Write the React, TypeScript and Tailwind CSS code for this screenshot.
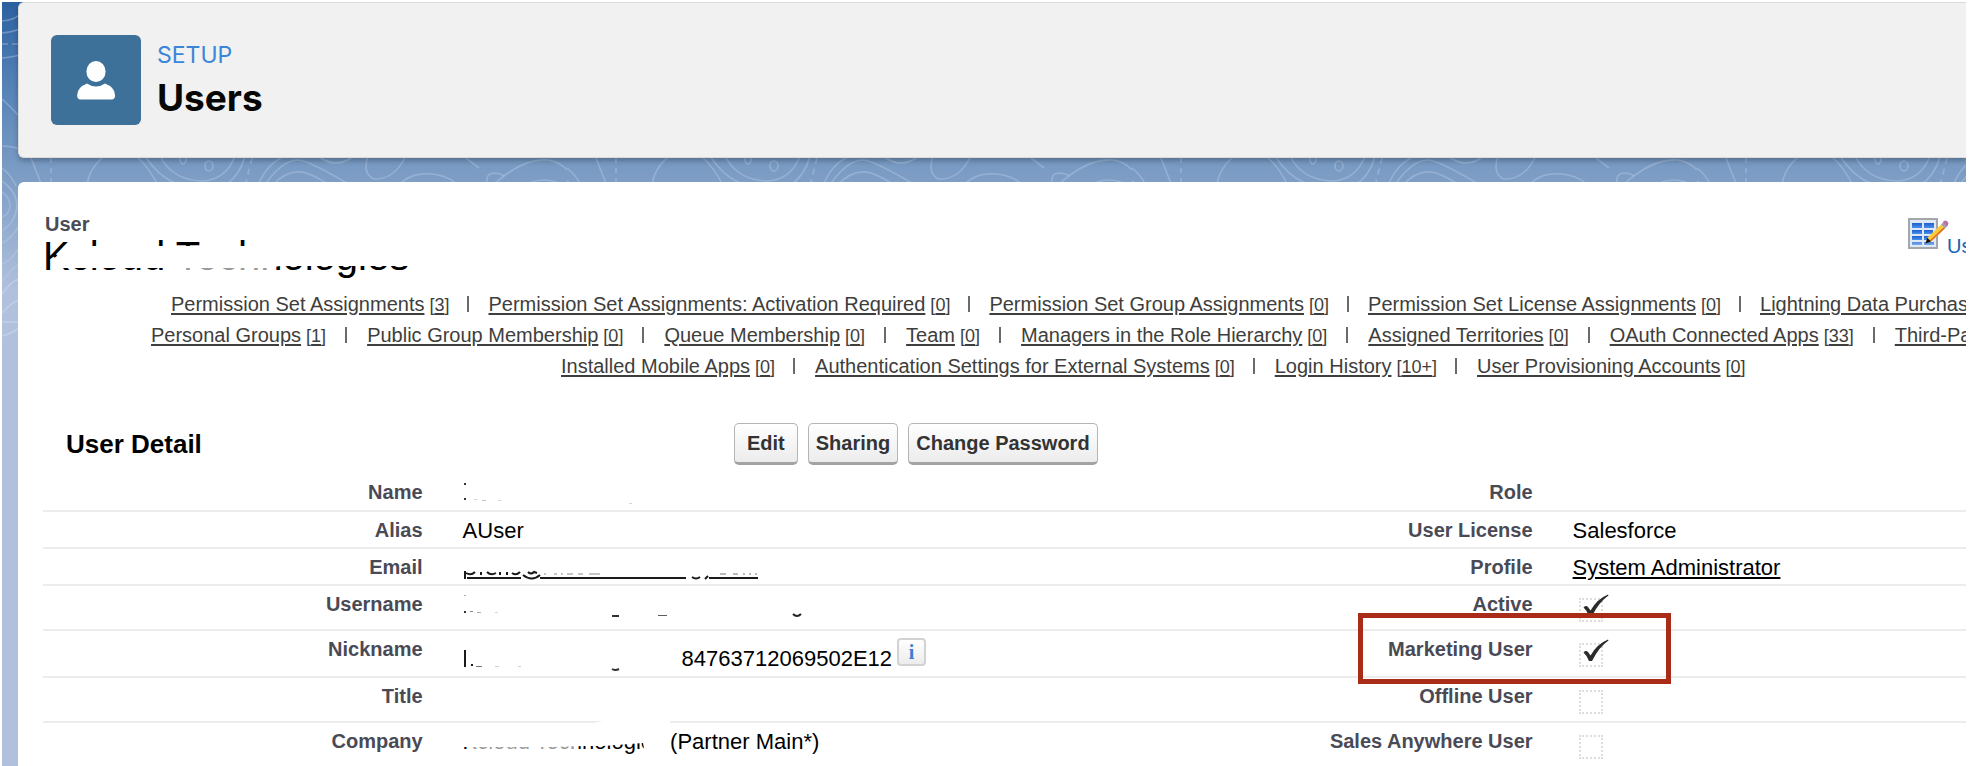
import React from "react";

type RelatedLink = { name: string; count?: string };

const relatedRows: { indent: string; divider: string; links: RelatedLink[] }[] = [
  {
    indent: "pl-[128px]",
    divider: "ml-[18px] mr-[19px]",
    links: [
      { name: "Permission Set Assignments", count: "3" },
      { name: "Permission Set Assignments: Activation Required", count: "0" },
      { name: "Permission Set Group Assignments", count: "0" },
      { name: "Permission Set License Assignments", count: "0" },
      { name: "Lightning Data Purchas" },
    ],
  },
  {
    indent: "pl-[108px]",
    divider: "ml-[19px] mr-5",
    links: [
      { name: "Personal Groups", count: "1" },
      { name: "Public Group Membership", count: "0" },
      { name: "Queue Membership", count: "0" },
      { name: "Team", count: "0" },
      { name: "Managers in the Role Hierarchy", count: "0" },
      { name: "Assigned Territories", count: "0" },
      { name: "OAuth Connected Apps", count: "33" },
      { name: "Third-Pa" },
    ],
  },
  {
    indent: "pl-[518px]",
    divider: "ml-[18px] mr-5",
    links: [
      { name: "Installed Mobile Apps", count: "0" },
      { name: "Authentication Settings for External Systems", count: "0" },
      { name: "Login History", count: "10+" },
      { name: "User Provisioning Accounts", count: "0" },
    ],
  },
];

function Backdrop() {
  return (
    <svg className="absolute inset-0 h-[380px] w-full" aria-hidden="true">
      <defs>
        <pattern id="contours" width="565" height="380" patternUnits="userSpaceOnUse">
          <g fill="none" stroke="#b7cae6" strokeWidth="1.6" strokeOpacity="0.42">
            <path d="M29 156 L40 184" />
            <path d="M49 156 V182" strokeDasharray="5 5" />
            <path d="M85 184 Q86 168 102 154" />
            <path d="M134 154 Q148 166 156 184" />
            <path d="M143 154 Q160 180 184 184" />
            <path d="M158 154 Q170 178 200 179 Q224 178 233 154" />
            <path d="M243 154 Q238 174 222 184" />
            <ellipse cx="207" cy="164" rx="4" ry="5" />
            <ellipse cx="181" cy="157" rx="3" ry="5" />
            <path d="M250 156 L243 184" strokeDasharray="6 5" />
            <path d="M256 184 Q264 162 283 154" />
            <path d="M262 184 Q280 158 296 158 Q306 158 350 184" />
            <path d="M270 184 Q286 166 304 171 Q318 176 328 184" />
            <path d="M316 154 Q334 168 352 154" />
            <path d="M366 154 Q360 172 372 177 Q392 178 404 154" />
            <path d="M396 184 Q410 168 436 173 Q450 176 456 184" />
            <path d="M464 156 L477 166" />
            <path d="M486 184 Q482 172 492 171 Q498 171 502 174" />
            <path d="M490 184 Q520 156 546 158 Q558 160 565 168" />
            <path d="M0 166 Q10 174 14 184" />
            <path d="M522 184 Q542 172 562 184" />
            <path d="M0 19 Q12 18 17 13" />
            <path d="M0 31 Q11 30 17 27" />
            <path d="M0 42 H16" strokeDasharray="6 4" />
            <path d="M0 56 Q11 55 17 53" />
            <path d="M0 97 Q8 104 17 114" />
            <path d="M0 144 Q10 144 17 147" />
            <path d="M0 190 Q8 196 8 204 Q7 213 0 215" />
            <path d="M0 179 Q15 190 15 204 Q14 220 0 229" />
            <path d="M0 241 Q8 238 17 224" />
            <path d="M0 262 Q8 260 17 246" />
            <path d="M0 280 Q8 268 17 262" />
          </g>
          <g fill="none" stroke="#ccd7ec" strokeWidth="1.6" strokeOpacity="0.6">
            <path d="M0 292 Q8 280 17 277" />
            <path d="M0 311 Q10 300 17 298" />
            <path d="M0 320 H17" />
            <path d="M0 334 Q9 332 17 326" />
          </g>
        </pattern>
      </defs>
      <rect width="100%" height="380" fill="url(#contours)" />
    </svg>
  );
}

function UserGlyph() {
  return (
    <span className="flex size-[90px] items-center justify-center rounded-md bg-[#3d7199]">
      <svg viewBox="0 0 90 90" className="size-[90px]" aria-hidden="true" fill="#fff">
        <ellipse cx="45" cy="36.5" rx="9.6" ry="10.6" />
        <path d="M36 48.6 Q40 51.5 45 51.5 Q50 51.5 54 48.6 Q64 52.5 64 60 V61 Q64 64.4 60.6 64.4 H29.6 Q26.2 64.4 26.2 61 V60 Q26.2 52.5 36 48.6 Z" />
      </svg>
    </span>
  );
}

function LayoutIcon() {
  return (
    <svg viewBox="0 0 41 32" className="h-8 w-[41px] shrink-0" aria-hidden="true">
      <defs>
        <linearGradient id="cell" x1="0" y1="0" x2="0" y2="1">
          <stop offset="0" stopColor="#1d5fd0" />
          <stop offset="1" stopColor="#4b90ea" />
        </linearGradient>
      </defs>
      <rect x="1" y="1" width="28" height="29" fill="#dfe9f6" stroke="#a3a6aa" strokeWidth="2" />
      <g fill="url(#cell)">
        <rect x="4" y="5" width="10" height="5" />
        <rect x="16" y="5" width="10" height="5" />
        <rect x="4" y="12" width="10" height="4" />
        <rect x="16" y="12" width="9" height="4" />
        <rect x="4" y="18" width="10" height="4" />
        <rect x="16" y="18" width="6" height="4" />
        <rect x="4" y="24" width="10" height="3" opacity="0.7" />
        <rect x="16" y="24" width="10" height="3" opacity="0.7" />
      </g>
      <path d="M18 25 L19.5 19.5 L33 6.5 L37 10.5 L23 23.5 Z" fill="#f9cb3c" />
      <path d="M21.8 22.3 L35.6 9.2 L37 10.5 L23 23.5 Z" fill="#e8722a" />
      <path d="M17.5 25.5 L19.3 19.8 L23 23.6 Z" fill="#111" />
      <path d="M33 6.5 L34.6 5 L38.5 9 L37 10.5 Z" fill="#9aa0a8" />
      <path d="M34.6 5 Q36 1.6 39 3 Q42 5.6 38.5 9 Z" fill="#b973a8" />
    </svg>
  );
}

function Label({ children, htmlFor }: { children: React.ReactNode; htmlFor?: string }) {
  return (
    <th scope="row" className="pt-1 pr-5 text-right align-top text-[20px] leading-7 font-bold text-[#4a4a56]">
      {htmlFor ? <label htmlFor={htmlFor}>{children}</label> : children}
    </th>
  );
}

function Value({ children }: { children?: React.ReactNode }) {
  return <td className="relative pt-[5px] pl-5 align-top text-[22px] leading-7 whitespace-nowrap text-black">{children}</td>;
}

function Flag({ id, checked }: { id: string; checked?: boolean }) {
  return (
    <span className="relative mt-[7px] ml-[6px] block size-6">
      <input
        id={id}
        type="checkbox"
        defaultChecked={checked}
        className="block size-6 appearance-none border-2 border-dotted border-[#dedede] bg-white"
      />
      {checked && (
        <svg viewBox="0 0 26 24" className="pointer-events-none absolute -top-1 left-1 h-6 w-[26px]" aria-hidden="true">
          <path d="M0.5 13.5 Q3 11 5 13 L7.5 16.5 Q14 5 25 0.5 L25.5 1.5 Q16 8 9 22 L6 22 Q4 16.5 0.5 13.5 Z" fill="#2b2b2b" />
        </svg>
      )}
    </span>
  );
}

/* Leftover specks of values that have been wiped out on screen. */
function Specks({ children }: { children: React.ReactNode }) {
  return (
    <svg viewBox="0 0 350 40" className="pointer-events-none absolute top-0 left-[19px] h-10 w-[350px]" aria-hidden="true">
      {children}
    </svg>
  );
}

function ActionButton({ children, wide }: { children: React.ReactNode; wide?: boolean }) {
  return (
    <button
      type="button"
      className={
        "h-[42px] rounded-[5px] border border-b-[3px] border-[#b5b5b5] border-b-[#a3a3a3] bg-linear-to-b from-white to-[#ececec] text-[20px] leading-6 font-bold text-[#333] " +
        (wide ? "px-3" : "px-[7px]")
      }
    >
      {children}
    </button>
  );
}

export default function App() {
  return (
    <div className="h-screen overflow-hidden bg-white pt-[2px] pr-1 pl-[2px] font-['Liberation_Sans',Arial,sans-serif]">
      <div className="relative flex h-full flex-col overflow-hidden bg-[#b1c1dd] bg-[linear-gradient(180deg,#2b609f_0px,#4f7db3_70px,#7598c2_155px,#7f9ec6_180px,#b1c1dd_290px)] pl-4">
        <Backdrop />

        <header className="relative flex shrink-0 items-center gap-4 rounded-l-md border-y border-l border-[#dadada] bg-[#f1f1f1] py-8 pl-8 shadow-[0_3px_5px_rgba(0,0,0,0.25)]">
          <UserGlyph />
          <div className="font-[Inter,sans-serif]">
            <p className="text-[23px] leading-9 text-[#3b86d8]">SETUP</p>
            <h1 className="text-[37px] leading-[50px] font-bold text-[#080707]">Users</h1>
          </div>
        </header>

        <main className="relative mt-6 min-h-0 grow overflow-hidden rounded-tl-md bg-white pt-7 pl-[25px]">
          <div className="flex justify-between">
            <div>
              <p className="pl-[2px] text-[20px] leading-7 font-bold text-[#4a4a56]">User</p>
              <div className="relative">
                <h2 className="text-[40px] leading-9 whitespace-nowrap text-black">Kcloud Technologies</h2>
                <svg viewBox="0 0 370 44" className="pointer-events-none absolute top-0 left-0 h-11 w-[370px]" aria-hidden="true">
                  <path d="M26 8 L205 8 L205 0 L370 0 L370 28 L237 28 L225 30 L18 30 L9 26 L9 22 Z" fill="#fff" />
                  <path d="M130 28 H232 V34 H130 Z" fill="#fff" opacity="0.6" />
                </svg>
              </div>
            </div>
            <a href="#layout" className="mt-2 flex h-10 w-[58px] items-start overflow-hidden text-[20px] leading-6 whitespace-nowrap text-[#1565b0]">
              <LayoutIcon />
              <span className="-ml-[2px] mt-4">Us</span>
            </a>
          </div>

          <div className="w-[2220px]">
            <nav aria-label="Related lists" className="mt-[14px] text-[20px] leading-[30px] whitespace-nowrap text-[#3e3e3c]">
              {relatedRows.map((row) => (
                <ul key={row.indent} className={"flex h-[31px] items-center " + row.indent}>
                  {row.links.map((link, i) => (
                    <li key={link.name} className="flex items-center">
                      {i > 0 && <span className={"h-4 w-[2px] bg-[#6a6a6a] " + row.divider} />}
                      <a href="#related" className="flex items-baseline gap-[5px]">
                        <span className="underline decoration-2 underline-offset-2">{link.name}</span>
                        {link.count && (
                          <span className="text-[18px] leading-6">
                            [<span className="underline decoration-2 underline-offset-2">{link.count}</span>]
                          </span>
                        )}
                      </a>
                    </li>
                  ))}
                </ul>
              ))}
            </nav>

            <div className="mt-[42px] flex items-center">
              <h3 className="w-[691px] shrink-0 pl-[23px] text-[26px] leading-8 font-bold text-black">User Detail</h3>
              <div className="flex gap-[10px]">
                <ActionButton wide>Edit</ActionButton>
                <ActionButton>Sharing</ActionButton>
                <ActionButton>Change Password</ActionButton>
              </div>
            </div>

            <table className="mt-[9px] w-full table-fixed border-collapse">
              <colgroup>
                <col className="w-[18%]" />
                <col className="w-[32%]" />
                <col className="w-[18%]" />
                <col className="w-[32%]" />
              </colgroup>
              <tbody className="[&>tr]:border-b-2 [&>tr]:border-[#ececec]">
                <tr className="h-[37px]">
                  <Label>Name</Label>
                  <Value>
                    <Specks>
                      <g fill="#333">
                        <rect x="2" y="9" width="2" height="2" />
                        <rect x="2" y="24" width="2" height="2" />
                        <rect x="12" y="25" width="3" height="1" opacity="0.2" />
                        <rect x="20" y="26" width="4" height="1" opacity="0.3" />
                        <rect x="36" y="26" width="3" height="1" opacity="0.2" />
                        <rect x="167" y="29" width="3" height="1" opacity="0.2" />
                      </g>
                    </Specks>
                  </Value>
                  <Label>Role</Label>
                  <Value />
                </tr>
                <tr className="h-[37px]">
                  <Label>Alias</Label>
                  <Value>AUser</Value>
                  <Label>User License</Label>
                  <Value>Salesforce</Value>
                </tr>
                <tr className="h-[37px]">
                  <Label>Email</Label>
                  <Value>
                    <Specks>
                      <g fill="none" stroke="#1a1a1a" strokeWidth="2">
                        <path d="M5 29 H59 M78 29 H224 M247 29 H296" />
                        <path d="M3 22 V30" />
                        <path d="M61 26 Q70 33 78 26" />
                        <path d="M230 28 Q234 31 238 28 M243 30 L246 27" />
                        <path d="M4 24 Q9 27 13 23 M19 23 V26 M25 23 Q29 27 34 24 M38 23 V26 M45 23 V26 M50 24 Q54 27 58 23" />
                        <path d="M66 23 Q69 26 72 23 L75 24" />
                        <path d="M83 24 V26 M92 25 H95 M100 24 V26 M105 25 H111 M116 25 H121 M127 25 H138" opacity="0.25" />
                        <path d="M258 25 H264 M271 25 H276 M282 24 V26 M288 24 V26 M294 24 V26" opacity="0.3" />
                      </g>
                    </Specks>
                  </Value>
                  <Label>Profile</Label>
                  <Value>
                    <a href="#profile" className="underline decoration-2 underline-offset-2">
                      System Administrator
                    </a>
                  </Value>
                </tr>
                <tr className="h-[45px]">
                  <Label>Username</Label>
                  <Value>
                    <Specks>
                      <g fill="#333">
                        <rect x="2" y="9" width="2" height="1" opacity="0.4" />
                        <rect x="2" y="25" width="2" height="2" />
                        <rect x="8" y="25" width="3" height="1" opacity="0.6" />
                        <rect x="15" y="26" width="4" height="1" opacity="0.4" />
                        <rect x="33" y="26" width="3" height="1" opacity="0.2" />
                        <rect x="150" y="29" width="7" height="2" />
                        <rect x="196" y="29" width="9" height="1" opacity="0.8" />
                      </g>
                      <path d="M331 28 Q335 32 339 28" fill="none" stroke="#222" strokeWidth="2" />
                    </Specks>
                  </Value>
                  <Label htmlFor="active">Active</Label>
                  <Value>
                    <Flag id="active" checked />
                  </Value>
                </tr>
                <tr className="h-[47px]">
                  <Label>Nickname</Label>
                  <Value>
                    <Specks>
                      <g fill="#1a1a1a">
                        <rect x="2" y="19" width="2" height="17" />
                        <rect x="9" y="33" width="2" height="2" />
                        <rect x="14" y="35" width="6" height="1" opacity="0.6" />
                        <rect x="33" y="35" width="4" height="1" opacity="0.2" />
                        <rect x="56" y="35" width="3" height="1" opacity="0.2" />
                      </g>
                      <path d="M150 38 Q153 40 157 38" fill="none" stroke="#333" strokeWidth="2" />
                    </Specks>
                    <div className="flex items-start pl-[219px]">
                      <span className="mt-[9px]">84763712069502E12</span>
                      <button
                        type="button"
                        aria-label="Nickname help"
                        className="ml-[5px] mt-[2px] h-7 w-[29px] rounded border-2 border-[#d2d2d2] bg-linear-to-b from-white to-[#ececec] font-['Liberation_Serif',serif] text-[20px] leading-5 font-bold text-[#3b7cd8]"
                      >
                        i
                      </button>
                    </div>
                  </Value>
                  <Label htmlFor="marketing">Marketing User</Label>
                  <Value>
                    <Flag id="marketing" checked />
                    <span className="pointer-events-none absolute -top-[18px] -left-[195px] z-10 h-[71px] w-[313px] border-5 border-[#a92c18]" />
                  </Value>
                </tr>
                <tr className="h-[45px]">
                  <Label>Title</Label>
                  <Value />
                  <Label htmlFor="offline">Offline User</Label>
                  <Value>
                    <Flag id="offline" />
                  </Value>
                </tr>
                <tr className="h-[45px]">
                  <Label>Company</Label>
                  <Value>
                    Kcloud Technologies (Partner Main*)
                    <svg viewBox="0 0 210 40" className="pointer-events-none absolute -top-1 left-5 h-10 w-[210px]" aria-hidden="true">
                      <path d="M140 2 L150 0 H207 V40 H183 L180 24 L140 27 H120 L90 28 H0 V6 H120 Z" fill="#fff" />
                      <path d="M6 22 H110 V34 H6 Z" fill="#fff" opacity="0.6" />
                    </svg>
                  </Value>
                  <Label htmlFor="anywhere">Sales Anywhere User</Label>
                  <Value>
                    <Flag id="anywhere" />
                  </Value>
                </tr>
              </tbody>
            </table>
          </div>
        </main>
      </div>
    </div>
  );
}
